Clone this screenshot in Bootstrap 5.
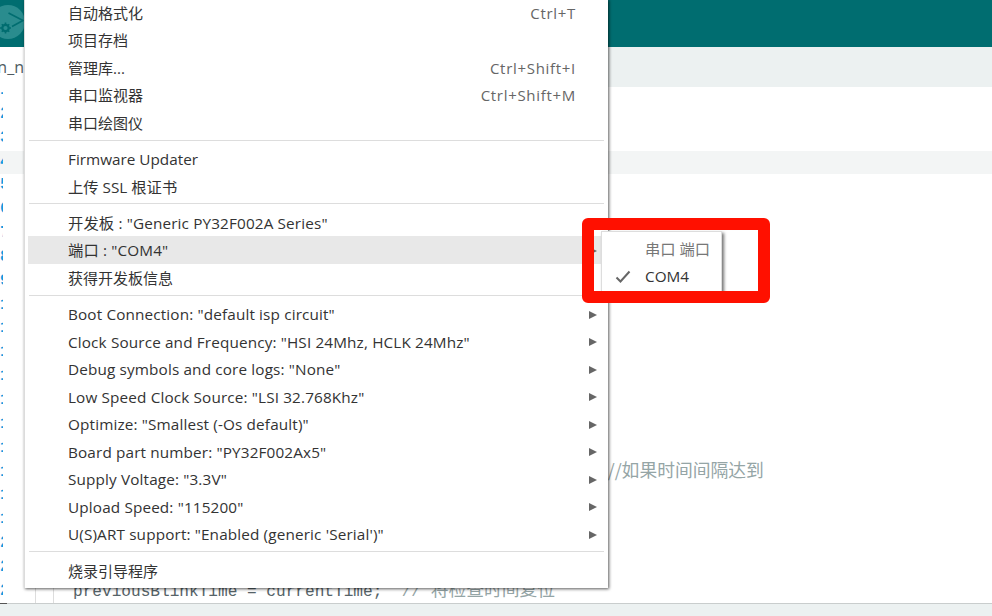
<!DOCTYPE html>
<html lang="zh-CN">

<head>
    <meta charset="UTF-8">
    <meta name="viewport" content="width=device-width, initial-scale=1.0">
    <title>Arduino IDE</title>
    <link href="https://cdn.jsdelivr.net/npm/bootstrap@5.3.3/dist/css/bootstrap.min.css" rel="stylesheet">
    <style>
        html, body { height: 100%; overflow: hidden; }
        body { background: #fff; font-family: "Open Sans", "Noto Sans CJK SC", sans-serif; color: #333; }
        .ide-page { height: 616px; width: 992px; overflow: hidden; position: relative; }
        .ide-head { height: 47px; background: #006d70; overflow: hidden; flex: none; }
        .ide-logo { display: block; }
        .ide-tabs { height: 40px; background: #ecf1f1; flex: none; }
        .ide-tab { width: 25px; background: #fff; color: #4e5b61; font-size: 16px; overflow: hidden; white-space: nowrap; padding-right: 1px; }
        .ide-editor { overflow: hidden; min-height: 0; }
        .ide-lines { margin-top: -8px; }
        .ide-line { height: 23.85px; line-height: 23.85px; white-space: pre; font-family: "Liberation Mono", "Noto Sans CJK SC", monospace; font-size: 16.13px; color: #566368; }
        .ide-line.is-current { background: #f3f5f5; }
        .ide-num { width: 3px; flex: none; overflow: hidden; color: #0f9be0; font-weight: 700; }
        .ide-code { padding-left: 31.3px; }
        .ide-cmt { color: #95a5a6; }
        .ide-zh { font-size: 17.8px; line-height: 1; font-family: "Noto Sans CJK SC", sans-serif; }
        .ide-far { margin-left: 3px; }
        .ide-guides { background: linear-gradient(#ddd, #ddd) 35px 0 / 1px 100% no-repeat, linear-gradient(#ddd, #ddd) 53px 0 / 1px 100% no-repeat; }
        .ide-foot { height: 13px; flex: none; background: #ecf1f1; border-top: 1px solid #c9cdcd; }
        .ide-foot::before { content: ""; display: block; width: 7px; height: 1px; margin-top: -1px; background: #555; }

        .ide-menu.dropdown-menu { position: absolute; display: block; top: -1.5px; left: 24px; width: 584px; margin: 0; padding: 0 3px 4px 3px; border: 0; border-left: 1px solid #dcdcdc; border-radius: 0; background: #fff; box-shadow: 1px 1px 3px rgba(0, 0, 0, .65); }
        .ide-menu .dropdown-item { height: 27.48px; padding: 2px 8px 0 40px; color: #333; font-size: 15.3px; letter-spacing: .14px; white-space: nowrap; }
        .ide-menu .dropdown-item.is-open { background: #e8e8e8; color: #333; }
        .ide-menu .dropdown-divider { margin: 3.7px 1px 4.3px 1px; border-top: 1px solid #ddd; opacity: 1; }
        .ide-menu .ide-menu-zh { font-size: 15px; letter-spacing: 0; }
        .ide-menu .ide-menu-plain { letter-spacing: 0; }
        .ide-key { color: #666; margin-right: 21px; letter-spacing: .7px; }
        .ide-arrow { width: 0; height: 0; border-left: 8px solid #666; border-top: 4.5px solid transparent; border-bottom: 4.5px solid transparent; }

        .ide-sub { position: absolute; z-index: 1001; left: 601px; top: 231px; width: 121px; height: 66px; background: #fff; border: 1px solid #ddd; box-shadow: 2px 2px 3px rgba(0, 0, 0, .55); font-size: 15.3px; padding-top: 3.5px; }
        .ide-sub-row { height: 27.5px; padding-left: 43px; position: relative; color: #333; }
        .ide-sub-title { color: #777; }
        .ide-check { position: absolute; left: 13px; top: 7px; }
        .ide-callout { position: absolute; z-index: 1002; left: 582px; top: 218px; width: 188px; height: 85px; border: 12px solid #ff1000; border-top-width: 12.5px; border-radius: 6px; pointer-events: none; }
    </style>
</head>

<body>
    <div class="ide-page d-flex flex-column">
        <header class="ide-head">
            <svg class="ide-logo" width="26" height="47" viewBox="0 0 26 47">
                <circle cx="8" cy="22" r="17" fill="#2a8c8e" />
                <path d="M8.5 13 L23 20.5 L12 26.5" fill="none" stroke="#006d70" stroke-width="1.6" stroke-linejoin="round" />
                <circle cx="5.5" cy="28" r="3.2" fill="#2a8c8e" stroke="#006d70" stroke-width="2.2" />
                <path d="M5.5 22.5v2.5M5.5 31v2.5M0 28h2.5M8.5 28h2.5M1.8 24.3l1.7 1.7M9.2 24.3l-1.7 1.7M1.8 31.7l1.7-1.7M9.2 31.7l-1.7-1.7" stroke="#006d70" stroke-width="1.6" />
            </svg>
        </header>
        <div class="ide-tabs d-flex">
            <div class="ide-tab d-flex align-items-center justify-content-end">n_n</div>
        </div>
        <div class="ide-editor flex-grow-1">
            <div class="ide-lines" id="editor-lines"></div>
        </div>
        <div class="ide-foot"></div>

        <ul class="ide-menu dropdown-menu show list-unstyled">
            <li class="dropdown-item ide-menu-zh d-flex align-items-center justify-content-between"><span>自动格式化</span><span class="ide-key">Ctrl+T</span></li>
            <li class="dropdown-item ide-menu-zh d-flex align-items-center">项目存档</li>
            <li class="dropdown-item ide-menu-zh d-flex align-items-center justify-content-between"><span>管理库...</span><span class="ide-key">Ctrl+Shift+I</span></li>
            <li class="dropdown-item ide-menu-zh d-flex align-items-center justify-content-between"><span>串口监视器</span><span class="ide-key">Ctrl+Shift+M</span></li>
            <li class="dropdown-item ide-menu-zh d-flex align-items-center">串口绘图仪</li>
            <li><hr class="dropdown-divider"></li>
            <li class="dropdown-item ide-menu-plain d-flex align-items-center">Firmware Updater</li>
            <li class="dropdown-item ide-menu-plain d-flex align-items-center">上传 SSL 根证书</li>
            <li><hr class="dropdown-divider"></li>
            <li class="dropdown-item d-flex align-items-center justify-content-between"><span>开发板 : "Generic PY32F002A Series"</span><span class="ide-arrow"></span></li>
            <li class="dropdown-item is-open d-flex align-items-center justify-content-between"><span>端口 : "COM4"</span><span class="ide-arrow"></span></li>
            <li class="dropdown-item ide-menu-zh d-flex align-items-center">获得开发板信息</li>
            <li><hr class="dropdown-divider"></li>
            <li class="dropdown-item d-flex align-items-center justify-content-between"><span>Boot Connection: "default isp circuit"</span><span class="ide-arrow"></span></li>
            <li class="dropdown-item d-flex align-items-center justify-content-between"><span>Clock Source and Frequency: "HSI 24Mhz, HCLK 24Mhz"</span><span class="ide-arrow"></span></li>
            <li class="dropdown-item d-flex align-items-center justify-content-between"><span>Debug symbols and core logs: "None"</span><span class="ide-arrow"></span></li>
            <li class="dropdown-item d-flex align-items-center justify-content-between"><span>Low Speed Clock Source: "LSI 32.768Khz"</span><span class="ide-arrow"></span></li>
            <li class="dropdown-item d-flex align-items-center justify-content-between"><span>Optimize: "Smallest (-Os default)"</span><span class="ide-arrow"></span></li>
            <li class="dropdown-item d-flex align-items-center justify-content-between"><span>Board part number: "PY32F002Ax5"</span><span class="ide-arrow"></span></li>
            <li class="dropdown-item d-flex align-items-center justify-content-between"><span>Supply Voltage: "3.3V"</span><span class="ide-arrow"></span></li>
            <li class="dropdown-item d-flex align-items-center justify-content-between"><span>Upload Speed: "115200"</span><span class="ide-arrow"></span></li>
            <li class="dropdown-item d-flex align-items-center justify-content-between"><span>U(S)ART support: "Enabled (generic 'Serial')"</span><span class="ide-arrow"></span></li>
            <li><hr class="dropdown-divider"></li>
            <li class="dropdown-item ide-menu-zh d-flex align-items-center">烧录引导程序</li>
        </ul>

        <div class="ide-sub">
            <div class="ide-sub-row ide-sub-title d-flex align-items-center">串口 端口</div>
            <div class="ide-sub-row d-flex align-items-center">
                <svg class="ide-check" width="16" height="14" viewBox="0 0 16 14"><path d="M1.5 7.5 L5.5 11.5 L14.5 1.5" fill="none" stroke="#666" stroke-width="2" /></svg>
                COM4
            </div>
        </div>
        <div class="ide-callout"></div>
    </div>

    <script>
        // only these two lines show from under the menu
        const code = {
            16: '  if (currentTime - previousBlinkTime >= blinkInterval) {  <span class="ide-cmt ide-zh ide-far">//如果时间间隔达到</span>',
            21: '    previousBlinkTime = currentTime;  <span class="ide-cmt">// </span><span class="ide-cmt ide-zh">将检查时间复位</span>'
        };
        const box = document.getElementById('editor-lines');
        for (let i = 0; i < 23; i++) {
            const cls = i === 3 ? ' is-current' : '';
            const guides = i === 21 || i === 22 ? ' ide-guides' : '';
            box.innerHTML += `<div class="ide-line d-flex${cls}${guides}"><span class="ide-num">${i + 1}</span><span class="ide-code">${code[i] || ''}</span></div>`;
        }
    </script>
    <script src="https://cdn.jsdelivr.net/npm/bootstrap@5.3.3/dist/js/bootstrap.bundle.min.js"></script>
</body>
</html>
